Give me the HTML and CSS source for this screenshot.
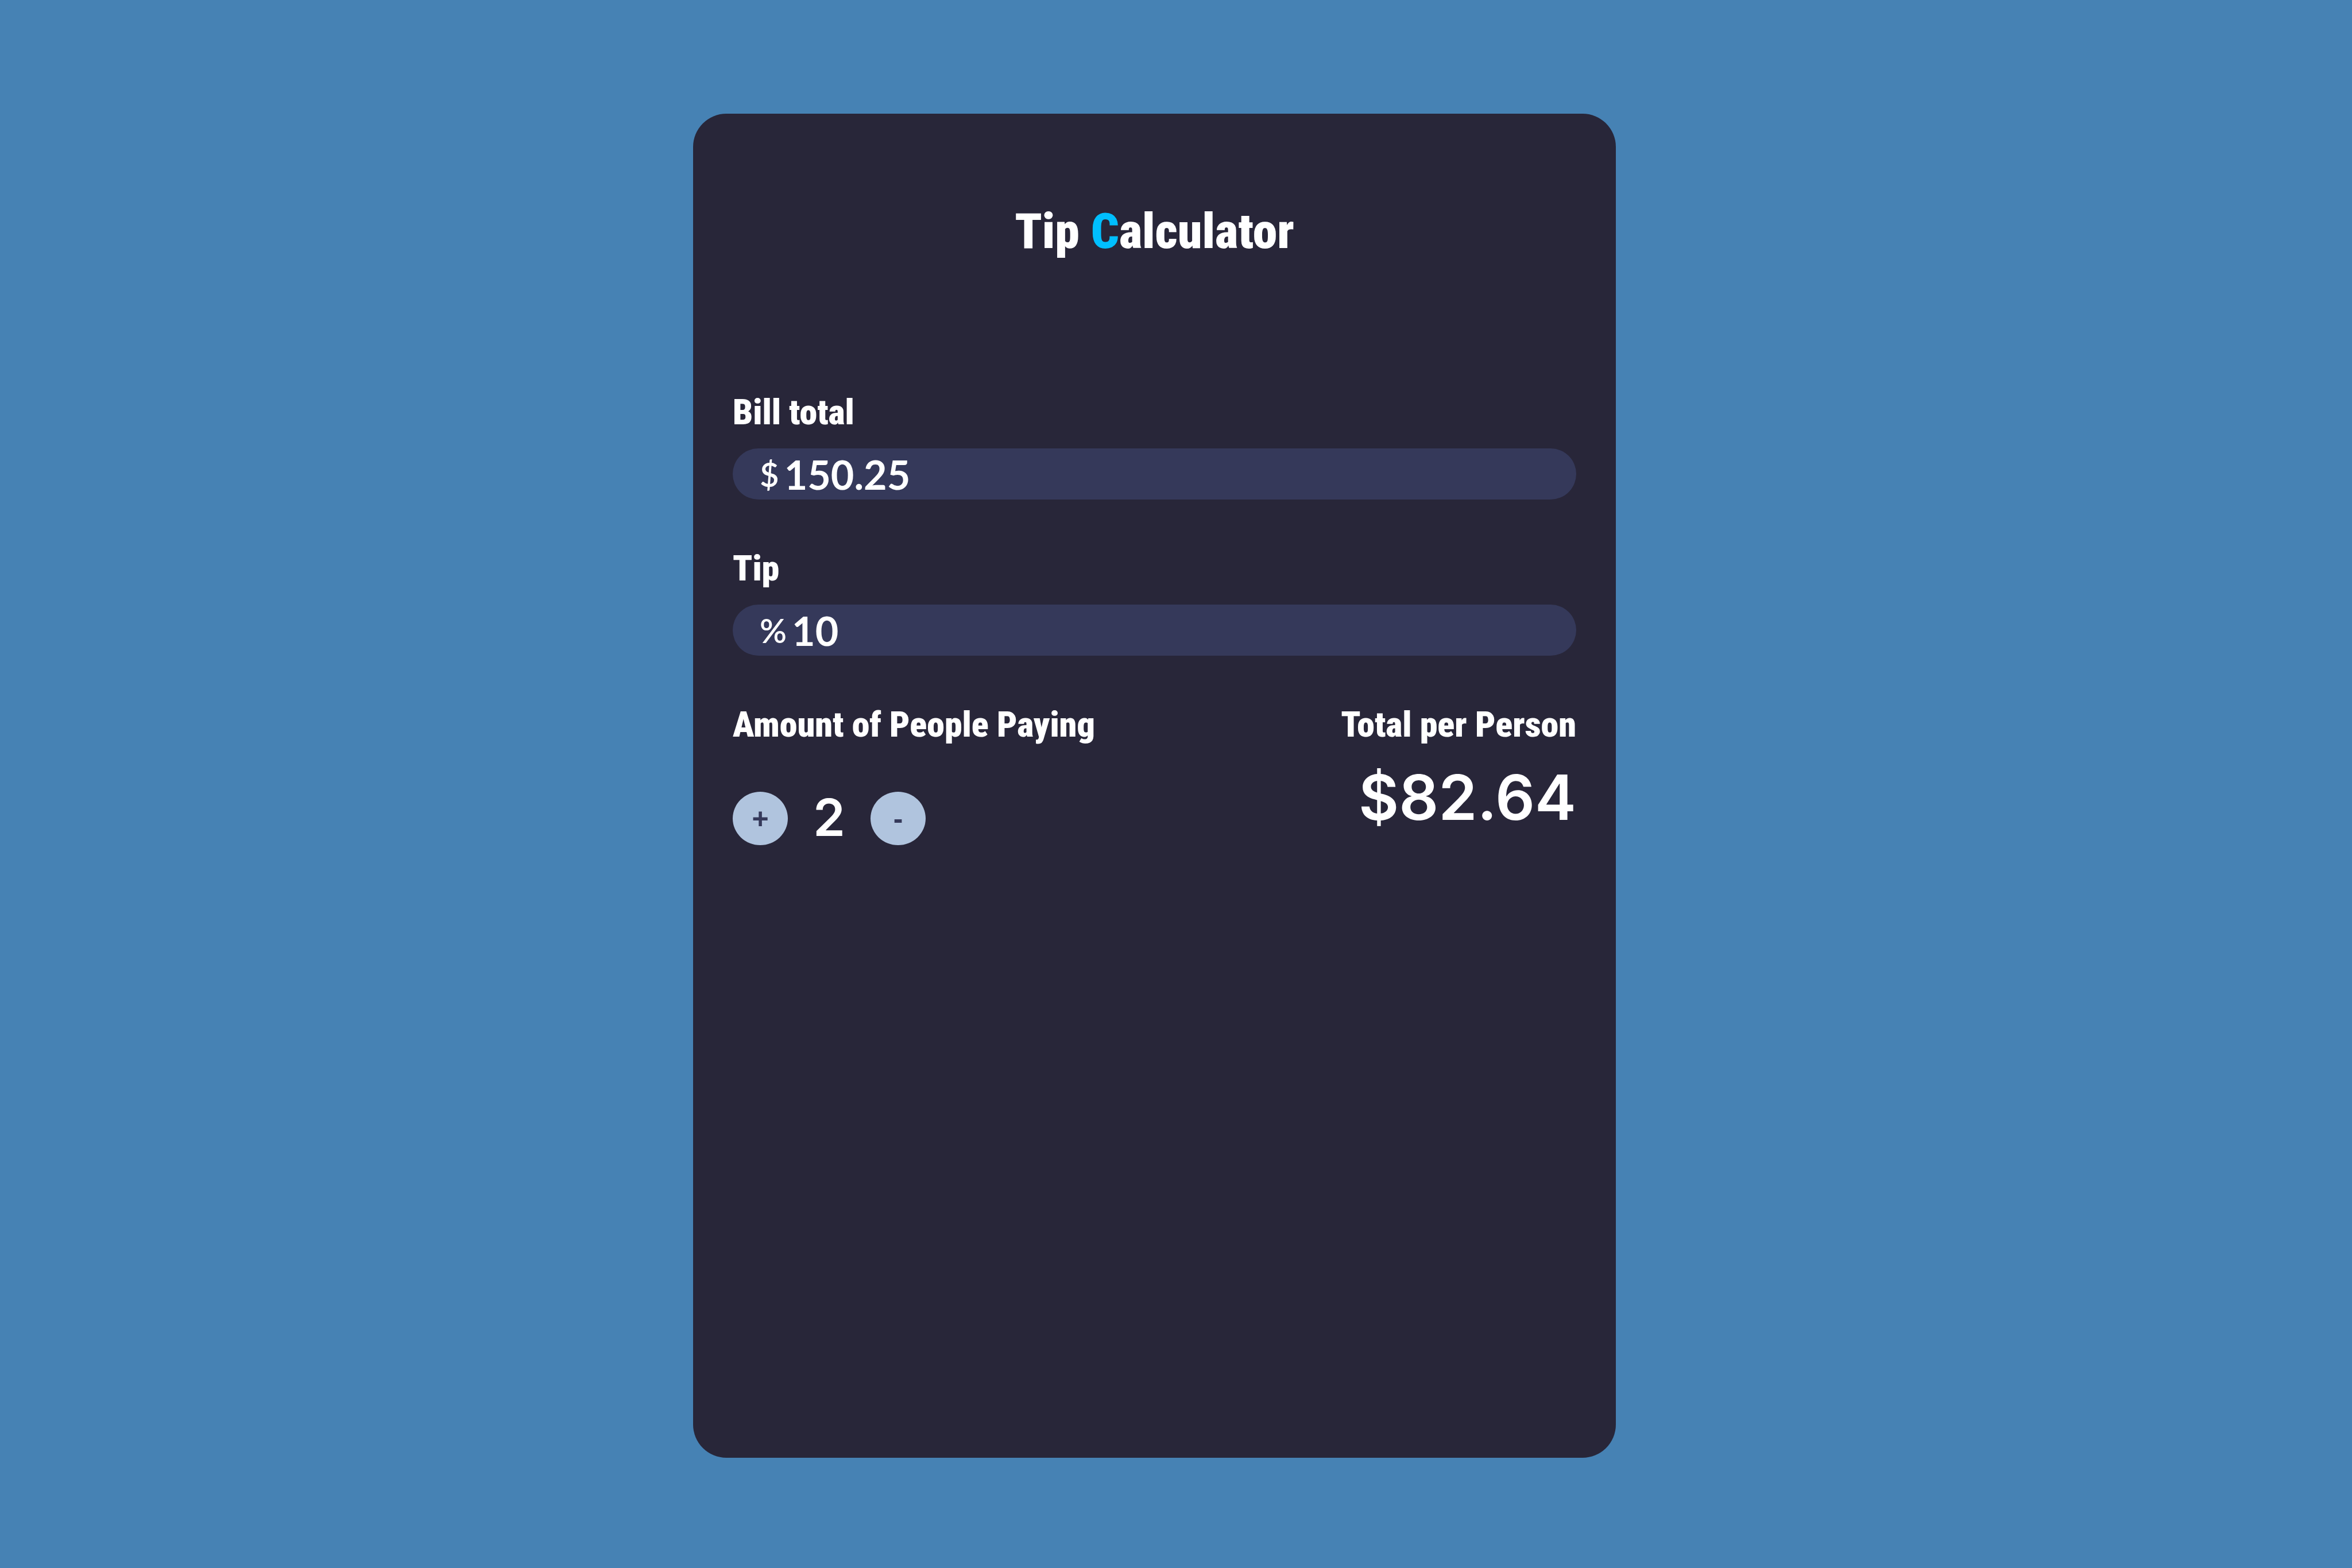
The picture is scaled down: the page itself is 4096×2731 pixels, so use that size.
FILE: index.html
```html
<!DOCTYPE html>
<html lang="en">
<head>
  <meta charset="utf-8">
  <meta name="viewport" content="width=device-width, initial-scale=1">
  <title>Tip Calculator</title>
  <link rel="stylesheet" href="styles.css">
</head>
<body>
  <main class="card">
    <h1 class="title">Tip <span class="accent">C</span>alculator</h1>
    <form class="form">
      <div class="group">
        <label class="label" for="bill">Bill total</label>
        <div class="field">
          <span class="unit">$</span>
          <input class="input" id="bill" type="text" inputmode="decimal" value="150.25">
        </div>
      </div>
      <div class="group">
        <label class="label" for="tip">Tip</label>
        <div class="field">
          <span class="unit">%</span>
          <input class="input" id="tip" type="text" inputmode="numeric" value="10">
        </div>
      </div>
      <div class="summary">
        <section class="people">
          <h2 class="label">Amount of People Paying</h2>
          <div class="counter">
            <button class="step" type="button" aria-label="Add a person">+</button>
            <output class="count">2</output>
            <button class="step" type="button" aria-label="Remove a person">-</button>
          </div>
        </section>
        <section class="total">
          <h2 class="label">Total per Person</h2>
          <output class="amount">$82.64</output>
        </section>
      </div>
    </form>
  </main>
</body>
</html>
```
FILE: styles.css
```css
* {
  box-sizing: border-box;
  margin: 0;
}

body {
  display: flex;
  justify-content: center;
  min-height: 100vh;
  padding: 198px 75px 192px 0;
  background: steelblue;
  color: white;
  font-family: "Lato", "Liberation Sans", sans-serif;
}

.card {
  width: 100%;
  max-width: 1607px;
  padding: 155px 69px;
  border-radius: 58px;
  background: #282639;
}

.title {
  margin-bottom: 230px;
  font-family: "Roboto Condensed", "Roboto", sans-serif;
  font-size: 86px;
  font-weight: 900;
  line-height: 100px;
  text-align: center;
}

.accent {
  color: deepskyblue;
}

.form {
  display: flex;
  flex-direction: column;
  gap: 85px;
}

.group {
  display: flex;
  flex-direction: column;
  gap: 26px;
}

.label {
  font-family: "Roboto Condensed", "Roboto", sans-serif;
  font-size: 62px;
  font-weight: 900;
  line-height: 70px;
}

.group .label,
.summary .label {
  padding-bottom: 2px;
}

.field {
  display: flex;
  align-items: center;
  gap: 9px;
  height: 89px;
  padding: 0 47px;
  border-radius: 45px;
  background: #35395a;
}

.unit {
  font-size: 58px;
  font-weight: 600;
}

.input {
  flex: 1;
  min-width: 0;
  padding: 0;
  border: 0;
  outline: 0;
  background: transparent;
  color: inherit;
  font: inherit;
  font-size: 70px;
  font-weight: 700;
}

.summary {
  display: flex;
  justify-content: space-between;
}

.people {
  display: flex;
  flex-direction: column;
  gap: 80px;
}

.counter {
  display: flex;
  align-items: center;
  gap: 44px;
}

.step {
  width: 96px;
  height: 93px;
  padding: 0;
  border: 0;
  border-radius: 50%;
  background: lightsteelblue;
  color: #35395a;
  font-family: "Liberation Sans", sans-serif;
  font-size: 50px;
  font-weight: 700;
}

.count,
.amount {
  font-family: "Inter", "Liberation Sans", sans-serif;
  font-weight: 600;
}

.count {
  padding-bottom: 4px;
  font-size: 90px;
  line-height: 80px;
}

.total {
  display: flex;
  flex-direction: column;
  align-items: flex-end;
  gap: 20px;
}

.amount {
  font-size: 108px;
  line-height: 140px;
}
```
